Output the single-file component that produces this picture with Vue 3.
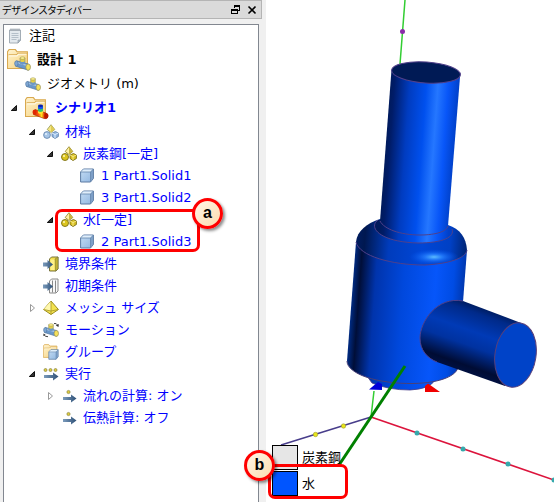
<script setup>
import { ref } from 'vue'

const rows = ref([
  { text: '注記', icon: 'note', level: 0, tone: 'plain' },
  { text: '設計 1', icon: 'design', level: 0, tone: 'plain', strong: true },
  { text: 'ジオメトリ (m)', icon: 'geometry', level: 1, tone: 'plain' },
  { text: 'シナリオ1', icon: 'scenario', level: 1, strong: true, arrow: 'open' },
  { text: '材料', icon: 'materials', level: 2, arrow: 'open' },
  { text: '炭素鋼[一定]', icon: 'material', level: 3, arrow: 'open' },
  { text: '1 Part1.Solid1', icon: 'solid', level: 4 },
  { text: '3 Part1.Solid2', icon: 'solid', level: 4 },
  { text: '水[一定]', icon: 'material', level: 3, arrow: 'open', callout: 'a' },
  { text: '2 Part1.Solid3', icon: 'solid', level: 4 },
  { text: '境界条件', icon: 'boundary', level: 2 },
  { text: '初期条件', icon: 'initial', level: 2 },
  { text: 'メッシュ サイズ', icon: 'mesh', level: 2, arrow: 'closed' },
  { text: 'モーション', icon: 'motion', level: 2 },
  { text: 'グループ', icon: 'group', level: 2 },
  { text: '実行', icon: 'solve', level: 2, arrow: 'open' },
  { text: '流れの計算: オン', icon: 'run', level: 3, arrow: 'closed' },
  { text: '伝熱計算: オフ', icon: 'run', level: 3 }
])

const legend = [
  { text: '炭素鋼', kind: 'steel' },
  { text: '水', kind: 'water' }
]
</script>

<template>
  <svg class="defs" aria-hidden="true">
    <defs>
      <linearGradient id="folderFill" x1="0" y1="0" x2="1" y2="1">
        <stop offset="0" stop-color="#fff3cf" /><stop offset="1" stop-color="#f6d27c" />
      </linearGradient>
      <linearGradient id="cubeFill" x1="0" y1="0" x2="1" y2="1">
        <stop offset="0" stop-color="#c4dcf4" /><stop offset="1" stop-color="#8fb5df" />
      </linearGradient>
      <linearGradient id="arrowFill" x1="0" y1="0" x2="1" y2="0">
        <stop offset="0" stop-color="#7c9cbd" /><stop offset="1" stop-color="#2d4f75" />
      </linearGradient>
      <linearGradient id="heat" x1="0" y1="0" x2="1" y2="0">
        <stop offset="0" stop-color="#d02000" /><stop offset="0.35" stop-color="#ff5a10" />
        <stop offset="0.55" stop-color="#ffe020" /><stop offset="0.75" stop-color="#e03000" />
        <stop offset="1" stop-color="#900000" />
      </linearGradient>
    </defs>
    <symbol id="pipe" viewBox="0 0 16 14">
      <path d="M2.500 4.500 L13.500 7.500 V13.300 L1.500 9.500Z" fill="#6a97ca" stroke="#52779f" stroke-width=".7" />
      <path d="M2.500 6 L12 8.700" stroke="#a3c4e6" stroke-width="1.300" />
      <path d="M5.700 1.800 V6.500 Q8 8.500 10.300 6.500 V1.800Z" fill="#e4cf48" stroke="#96915a" stroke-width=".6" />
      <path d="M5.700 4.800 V7 Q8 9 10.300 7 V4.800 Q8 6.500 5.700 4.800Z" fill="#6a97ca" />
      <ellipse cx="8" cy="1.900" rx="2.300" ry="1.200" fill="#fff38a" stroke="#96915a" stroke-width=".5" />
      <ellipse cx="2.200" cy="7" rx="1.600" ry="2.500" fill="#7ea6d3" stroke="#52779f" stroke-width=".6" />
      <ellipse cx="13.300" cy="10.400" rx="2.200" ry="3" fill="#f5e05a" stroke="#96915a" stroke-width=".7" />
    </symbol>
    <symbol id="folder" viewBox="0 0 21 19">
      <path d="M.5 18.500 V2.500 L2 .5 H8 L9.500 2.500 H19.500 V18.500Z" fill="url(#folderFill)" stroke="#d9a94f" />
      <path d="M1.500 5.500 H9 L10.500 4 H19" fill="none" stroke="#d9a94f" />
      <path d="M2 6.500 H9.500 L11 5 H18.500" fill="none" stroke="#fff9e5" />
    </symbol>
    <symbol id="cube" viewBox="0 0 14 15">
      <path d="M.6 4 L3.400 1 H13.400 V10.500 L10.500 14 H.6Z" fill="url(#cubeFill)" stroke="#5c7ba3" />
      <path d="M1 4 L3.500 1.500 H13 L10.500 4Z" fill="#e0eefb" />
      <path d="M10.500 4 L13 1.500 V10.300 L10.500 13.500Z" fill="#7d9fc7" />
      <path d="M.6 4 H10.500 V14 M10.500 4 L13.400 1" fill="none" stroke="#6585ac" stroke-width=".8" />
    </symbol>
    <symbol id="arrowRight" viewBox="0 0 10 9">
      <path d="M0 2.500 H4.500 V0 L10 4.500 L4.500 9 V6.500 H0Z" fill="url(#arrowFill)" />
    </symbol>

    <symbol id="i-note" viewBox="0 0 16 16">
      <path d="M2.500 2 H13.500 V12 L11 15 H2.500Z" fill="#e3e9ee" stroke="#a3adb6" />
      <path d="M4 .5 V3 M6 .5 V3 M8 .5 V3 M10 .5 V3 M12 .5 V3" stroke="#8a949e" />
      <path d="M4.500 5.500 H11.500 M4.500 7.500 H11.500 M4.500 9.500 H11.500 M4.500 11.500 H9.500" stroke="#b4bfc9" />
      <path d="M11 15 V12 H13.500Z" fill="#b9c4ce" stroke="#8b98a5" stroke-width=".6" />
    </symbol>
    <symbol id="i-design" viewBox="0 0 24 24">
      <use href="#folder" x="0" y="1" width="22" height="20" />
      <use href="#pipe" x="7" y="8" width="17" height="15" />
    </symbol>
    <symbol id="i-geometry" viewBox="0 0 16 16">
      <use href="#pipe" x="0" y="1" width="16" height="14" />
    </symbol>
    <symbol id="i-scenario" viewBox="0 0 24 24">
      <use href="#folder" x="0" y="1" width="22" height="20" />
      <path d="M10 13.500 L21 17 Q24 18 22.800 21 Q21.500 23.500 19 22.500 L8.500 18.500Z" fill="url(#heat)" stroke="#a02000" stroke-width=".6" />
      <ellipse cx="9.500" cy="16" rx="2" ry="2.600" fill="#e02800" />
      <path d="M13 10 V16 Q15.500 18 18 16 V10Z" fill="#32c46a" />
      <path d="M13 10 V12.500 Q15.500 14 18 12.500 V10Z" fill="#1750ef" />
      <path d="M13 15 Q15.500 17 18 15 V17 Q15.500 19 13 17Z" fill="#ffe12d" />
      <ellipse cx="15.500" cy="9.800" rx="2.500" ry="1.300" fill="#0821a8" />
      <ellipse cx="21.300" cy="20" rx="2" ry="2.700" fill="#b81800" />
    </symbol>
    <symbol id="i-materials" viewBox="0 0 16 16">
      <path d="M8 .7 L11.800 5.500 L8 8.500 L4.200 5.500Z" fill="#f5e781" stroke="#8f9354" stroke-width=".8" />
      <path d="M8 .7 L11.800 5.500 L8 8.500Z" fill="#dfcb55" />
      <circle cx="4" cy="11" r="3.400" fill="#a7c6e7" stroke="#5e80a8" stroke-width=".8" />
      <circle cx="3" cy="10" r="1" fill="#e6f3ff" />
      <path d="M9 9 L12.500 7.500 L15.400 9 V12.500 L12 14.500 L9 12.500Z" fill="#8db2dc" stroke="#5e80a8" stroke-width=".8" />
      <path d="M9 9 L12 10.500 L15.400 9 M12 10.500 V14" fill="none" stroke="#dfefff" />
    </symbol>
    <symbol id="i-material" viewBox="0 0 16 16">
      <path d="M8 .7 L11.800 5.500 L8 8.500 L4.200 5.500Z" fill="#fff2a5" stroke="#8b7d21" stroke-width=".8" />
      <path d="M8 .7 L11.800 5.500 L8 8.500Z" fill="#c9b642" />
      <circle cx="4" cy="11" r="3.500" fill="#dcc51e" stroke="#7b6e14" stroke-width=".9" />
      <circle cx="3" cy="10" r="1" fill="#fff9bf" />
      <path d="M9 9 L12.500 7.500 L15.400 9 V12.500 L12 14.500 L9 12.500Z" fill="#d8c024" stroke="#7b6e14" stroke-width=".9" />
      <path d="M9 9 L12 10.500 L15.400 9 M12 10.500 V14" fill="none" stroke="#fff4a0" stroke-width=".8" />
    </symbol>
    <symbol id="i-solid" viewBox="0 0 16 16">
      <use href="#cube" x="1" y="0" width="14" height="15" />
    </symbol>
    <symbol id="i-boundary" viewBox="0 0 16 16">
      <path d="M6.500 3 L8.500 1 H15 V13 L13 15 H6.500Z" fill="#f3de4d" stroke="#77733c" />
      <path d="M12 3 L15 1 V13 L12.500 15Z" fill="#c2b234" stroke="#77733c" stroke-width=".6" />
      <path d="M7.500 3.500 H11.500 V14 H7.500Z" fill="#fff08a" />
      <use href="#arrowRight" x="0" y="4" width="10" height="9" />
    </symbol>
    <symbol id="i-initial" viewBox="0 0 16 16">
      <path d="M6.500 3 L8.500 1 H15 V13 L13 15 H6.500Z" fill="#f8f8f8" stroke="#888" />
      <path d="M9.500 2.500 V14.500 M12.500 2.500 V14.500" stroke="#888" />
      <use href="#arrowRight" x="0" y="4" width="10" height="9" />
    </symbol>
    <symbol id="i-mesh" viewBox="0 0 16 16">
      <path d="M8 1 L15.400 9.500 L8 14.500 L.6 9.500Z" fill="#f3e250" stroke="#9b8c20" />
      <path d="M8 1 L.6 9.500 L8 11Z" fill="#fff8ad" />
      <path d="M8 1 V14.500 M.6 9.500 L8 11 L15.400 9.500" fill="none" stroke="#a59624" stroke-width=".8" />
    </symbol>
    <symbol id="i-motion" viewBox="0 0 16 16">
      <use href="#pipe" x="0" y="1" width="16" height="14" />
      <path d="M11 1.500 Q13.500 1 14.500 3 M5 14.700 Q2 14.700 1.200 13" fill="none" stroke="#444" />
      <path d="M12.800 3.500 L15.800 2 L15.500 5Z M.3 14 L.5 11.500 L2.800 13Z" fill="#333" />
    </symbol>
    <symbol id="i-group" viewBox="0 0 16 16">
      <use href="#folder" x="0" y="0" width="15" height="14" />
      <use href="#cube" x="5" y="5" width="11" height="11" />
    </symbol>
    <symbol id="i-solve" viewBox="0 0 16 16">
      <g fill="#dccb3b" stroke="#8b8440" stroke-width=".7">
        <circle cx="2.500" cy="4" r="1.500" /><circle cx="7.500" cy="4" r="1.500" /><circle cx="12.500" cy="4" r="1.500" />
      </g>
      <path d="M1 9 H10 V6.500 L15.500 10.500 L10 14.500 V12 H1Z" fill="url(#arrowFill)" />
    </symbol>
    <symbol id="i-run" viewBox="0 0 16 16">
      <circle cx="7.500" cy="4" r="1.600" fill="#dccb3b" stroke="#8b8440" stroke-width=".7" />
      <path d="M2 9 H10 V6.500 L15.500 10.500 L10 14.500 V12 H2Z" fill="url(#arrowFill)" />
    </symbol>
  </svg>

  <main class="workspace">
    <aside class="dock">
      <header class="dock-title">
        <h1>デザインスタディバー</h1>
        <button type="button" aria-label="フロート">
          <svg viewBox="0 0 10 10" width="10" height="10" shape-rendering="crispEdges">
            <path d="M3.500 3 V.5 H8.500 V5.500 H6.500 M3 1.500 H9 M.5 4.500 H6.500 V8.500 H.5Z M0 5 H7" fill="none" stroke="#000" />
          </svg>
        </button>
        <button type="button" aria-label="閉じる">
          <svg viewBox="0 0 10 10" width="10" height="10">
            <path d="M1.500 1.500 L8.500 8.500 M8.500 1.500 L1.500 8.500" stroke="#000" stroke-width="1.600" />
          </svg>
        </button>
      </header>

      <ul class="tree">
        <li
          v-for="row in rows"
          :key="row.text"
          class="row"
          :class="['level-' + row.level, row.tone, { strong: row.strong }]"
        >
          <span v-if="row.level > 0" class="slot">
            <button v-if="row.arrow" type="button" :aria-label="row.text">
              <svg viewBox="0 0 8 10" width="8" height="10">
                <path v-if="row.arrow === 'open'" d="M6.500 2.500 V7.500 H1.300Z" fill="#333" stroke="#111" />
                <path v-else d="M2.500 1.500 L6.500 5 L2.500 8.500Z" fill="#fff" stroke="#999" />
              </svg>
            </button>
          </span>
          <svg class="icon" aria-hidden="true"><use :href="'#i-' + row.icon" /></svg>
          <span class="label">{{ row.text }}</span>
          <span v-if="row.callout" class="mark tree-mark"><b class="badge">{{ row.callout }}</b></span>
        </li>
      </ul>
    </aside>

    <section class="viewport">
      <svg class="model" viewBox="266 0 288 502" role="img" aria-label="Part1">
        <defs>
          <linearGradient id="neck" gradientUnits="userSpaceOnUse" x1="386" y1="143" x2="455" y2="148">
            <stop offset="0" stop-color="#001a5c" /><stop offset=".06" stop-color="#001c68" />
            <stop offset=".28" stop-color="#003cc0" /><stop offset=".52" stop-color="#0050ee" />
            <stop offset=".69" stop-color="#2577ff" /><stop offset=".84" stop-color="#0856f8" />
            <stop offset="1" stop-color="#0040c8" />
          </linearGradient>
          <linearGradient id="body" gradientUnits="userSpaceOnUse" x1="352" y1="297" x2="463" y2="305">
            <stop offset="0" stop-color="#002a80" /><stop offset=".06" stop-color="#000e38" />
            <stop offset=".2" stop-color="#0034ac" /><stop offset=".45" stop-color="#0048dc" />
            <stop offset=".74" stop-color="#0656fa" /><stop offset=".9" stop-color="#004ce4" />
            <stop offset="1" stop-color="#0038b0" />
          </linearGradient>
          <linearGradient id="shoulder" gradientUnits="userSpaceOnUse" x1="356" y1="238" x2="467" y2="246">
            <stop offset="0" stop-color="#001c60" /><stop offset=".08" stop-color="#001850" />
            <stop offset=".3" stop-color="#003cbc" /><stop offset=".6" stop-color="#0046d6" />
            <stop offset=".85" stop-color="#0040c4" /><stop offset="1" stop-color="#002574" />
          </linearGradient>
          <linearGradient id="branch" gradientUnits="userSpaceOnUse" x1="490" y1="311" x2="468" y2="373">
            <stop offset="0" stop-color="#001e64" /><stop offset=".1" stop-color="#002a8a" />
            <stop offset=".38" stop-color="#003ab6" /><stop offset=".6" stop-color="#0032a0" />
            <stop offset=".9" stop-color="#000c34" /><stop offset="1" stop-color="#001040" />
          </linearGradient>
          <radialGradient id="glow">
            <stop offset="0" stop-color="#5cbcff" /><stop offset=".35" stop-color="#2680ff" stop-opacity=".85" />
            <stop offset="1" stop-color="#0050f0" stop-opacity="0" />
          </radialGradient>
        </defs>

        <g fill="none" stroke-width="1.500">
          <path d="M405 0 L400 64 M374 391 L371 417" stroke="#32cd32" />
          <path d="M371 417 L281 445" stroke="#483d8b" />
          <path d="M371 417 L554 480" stroke="#dc143c" />
        </g>
        <circle cx="402.500" cy="31.500" r="2.500" fill="#8a2ba8" />
        <g fill="#35a9ac">
          <circle cx="417" cy="433" r="2.500" /><circle cx="463" cy="449" r="2.500" />
          <circle cx="508" cy="464" r="2.500" /><circle cx="554" cy="480" r="2.500" />
        </g>
        <g fill="#e8e61c" stroke="#9a962a" stroke-width=".6">
          <circle cx="315.500" cy="434.500" r="2.200" /><circle cx="343.500" cy="426" r="2.200" />
        </g>

        <path d="M367 376 L372 383 Q388 390 410 390 Q430 389 435 380Z" fill="url(#body)" stroke="#463b88" stroke-width=".8" />
        <path d="M356 242 L347 361 C347 374 378 384 413 383.500 C442 383 457 375 458 367 L467 250Z" fill="url(#body)" />
        <path d="M347 361 C347 374 378 384 413 383.500 C442 383 457 375 458 367" fill="none" stroke="#4a4078" />
        <path d="M380 219 C367 223 357 231 356 242 C359 256 392 265 424 265 C449 264 466 258 467 250 C466 237 460 229 448 225Z" fill="url(#shoulder)" />
        <ellipse cx="434" cy="257" rx="25" ry="8" fill="url(#glow)" />
        <path d="M356 242 C359 256 392 265 424 265 C449 264 466 258 467 250" fill="none" stroke="#50408a" />
        <path d="M378 220 C368 227 379 242 418 243 C443 243 455 237 452 229" fill="url(#neck)" stroke="#50408a" />
        <path d="M391.500 70 L380 221 C384 229 400 235 420 235 C437 235 447 231 448 226 L460 77Z" fill="url(#neck)" />
        <path d="M380 221 C384 229 400 235 420 235 C437 235 447 231 448 226" fill="none" stroke="#50408a" />
        <ellipse cx="426" cy="72.500" rx="34.500" ry="10.500" transform="rotate(4 426 72.500)" fill="#001a55" stroke="#50408a" />
        <path d="M463 301 C437 296 420 322 420 338 C420 350 427 358 437 362 L505 386 L521 323Z" fill="url(#branch)" />
        <path d="M463 301 C437 296 420 322 420 338 C420 350 427 358 437 362" fill="none" stroke="#50408a" />
        <ellipse cx="515.500" cy="355" rx="20.500" ry="32.500" transform="rotate(9 515.500 355)" fill="#0043c8" stroke="#5a4078" />

        <path d="M369 389.500 L378 382 L382 384 L382 390Z" fill="#0000d8" />
        <path d="M425 392 V386 L428 383.500 L440 392Z" fill="#f00000" />
        <path d="M405 366 L339 465" stroke="#008000" stroke-width="3" />
      </svg>

      <div class="legend">
        <div v-for="item in legend" :key="item.text" class="legend-row">
          <i class="swatch" :class="item.kind"></i>
          <span>{{ item.text }}</span>
        </div>
        <span class="mark legend-mark"><b class="badge">b</b></span>
      </div>
    </section>
  </main>
</template>

<style>
body {
  margin: 0;
  background: #fff;
}
</style>

<style scoped>
.defs {
  position: absolute;
  width: 0;
  height: 0;
}
.workspace {
  display: flex;
  min-height: 100vh;
  font: 13px/22px "DejaVu Sans", "Noto Sans CJK JP", sans-serif;
  color: #000;
}
.dock {
  box-sizing: border-box;
  display: flex;
  flex: none;
  flex-direction: column;
  gap: 5px;
  width: 266px;
  padding-right: 4px;
  background: #f0f0f0;
}
.dock-title {
  box-sizing: border-box;
  display: flex;
  align-items: center;
  gap: 6px;
  height: 19px;
  padding: 0 4px 0 2px;
  border: 1px solid #b4b4b4;
  border-left: 0;
  background: #dadada;
}
.dock-title h1 {
  flex: 1;
  margin: 0;
  font: 10px/16px "Noto Sans CJK JP", sans-serif;
  font-feature-settings: "palt";
}
button {
  display: flex;
  padding: 0;
  border: 0;
  background: none;
}
.tree {
  flex: 1;
  margin: 0 3px;
  padding: 0;
  border: 1px solid #828790;
  border-bottom: 0;
  background: #fff;
  list-style: none;
}
.row {
  position: relative;
  display: flex;
  align-items: center;
  height: 22px;
  color: #0000ff;
  white-space: nowrap;
}
.row.plain {
  color: #000;
}
.row.strong {
  height: 26px;
  font-weight: bold;
}
.level-0 { padding-left: 3px; }
.level-1 { padding-left: 6px; }
.level-2 { padding-left: 24px; }
.level-3 { padding-left: 42px; }
.level-4 { padding-left: 60px; }
.slot {
  width: 15px;
}
.icon {
  width: 16px;
  height: 16px;
  margin-right: 6px;
}
.strong .icon {
  width: 24px;
  height: 24px;
}
.viewport {
  position: relative;
  flex: 1;
  min-width: 0;
}
.model {
  display: block;
  width: 100%;
}
.legend {
  position: absolute;
  left: 6px;
  bottom: 6px;
  font-family: "Noto Sans CJK JP", sans-serif;
}
.legend-row {
  display: flex;
  align-items: center;
  gap: 4px;
  height: 26px;
}
.swatch {
  box-sizing: border-box;
  width: 26px;
  height: 25px;
  border: 1px solid #000;
}
.steel { background: #e6e6e6; }
.water { background: #0055ff; }
.mark {
  position: absolute;
  box-sizing: border-box;
  border: 3px solid #ff0000;
  border-radius: 7px;
}
.tree-mark {
  top: 0;
  left: 51px;
  width: 145px;
  height: 43px;
}
.legend-mark {
  top: 20px;
  left: -4px;
  width: 80px;
  height: 35px;
}
.badge {
  position: absolute;
  box-sizing: border-box;
  width: 31px;
  height: 31px;
  border: 3px solid #ff0000;
  border-radius: 50%;
  background: linear-gradient(135deg, #fff6e8, #fbdcae);
  box-shadow: 2px 2px 3px rgba(0, 0, 0, 0.45);
  color: #000;
  font: bold 16px/24px "Liberation Sans", sans-serif;
  text-align: center;
}
.tree-mark .badge {
  top: -14px;
  right: -26px;
}
.legend-mark .badge {
  top: -17px;
  left: -27px;
}
</style>
